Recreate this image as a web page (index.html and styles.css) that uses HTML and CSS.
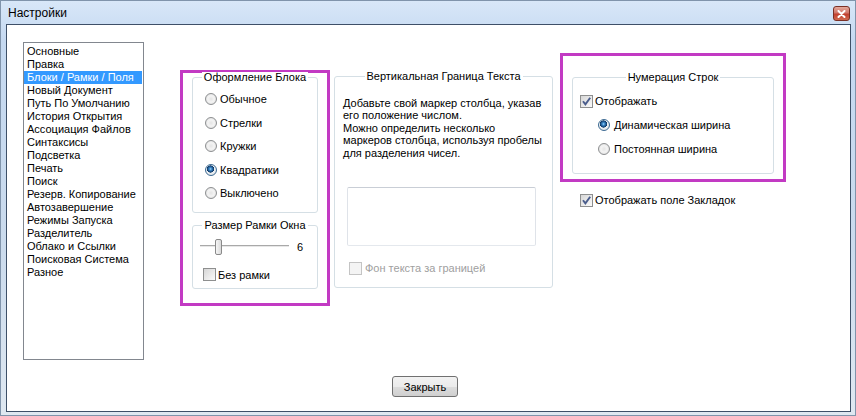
FILE: index.html
```html
<!DOCTYPE html>
<html lang="ru">
<head>
    <meta charset="UTF-8">
    <title>Настройки</title>
    <link rel="stylesheet" href="styles.css">
</head>
<body>
    <div class="window">
        <div class="titlebar">
            <span class="title">Настройки</span>
            <span class="close">
                <svg width="9" height="8" viewBox="0 0 9 8"><path d="M1.5 1 L7.5 7 M7.5 1 L1.5 7" stroke="#fff" stroke-width="2" stroke-linecap="round"/></svg>
            </span>
        </div>

        <div class="client">
            <div class="main">
                <ul class="listbox">
                    <li>Основные</li>
                    <li>Правка</li>
                    <li class="sel">Блоки / Рамки / Поля</li>
                    <li>Новый Документ</li>
                    <li>Путь По Умолчанию</li>
                    <li>История Открытия</li>
                    <li>Ассоциация Файлов</li>
                    <li>Синтаксисы</li>
                    <li>Подсветка</li>
                    <li>Печать</li>
                    <li>Поиск</li>
                    <li>Резерв. Копирование</li>
                    <li>Автозавершение</li>
                    <li>Режимы Запуска</li>
                    <li>Разделитель</li>
                    <li>Облако и Ссылки</li>
                    <li>Поисковая Система</li>
                    <li>Разное</li>
                </ul>

                <!-- блоки и рамка окна -->
                <div class="mark col-frame">
                    <div class="group group-style">
                        <div class="group-title">Оформление Блока</div>
                        <div class="opts">
                            <label class="opt"><span class="radio"></span>Обычное</label>
                            <label class="opt"><span class="radio"></span>Стрелки</label>
                            <label class="opt"><span class="radio"></span>Кружки</label>
                            <label class="opt"><span class="radio on"></span>Квадратики</label>
                            <label class="opt"><span class="radio"></span>Выключено</label>
                        </div>
                    </div>
                    <div class="group group-size">
                        <div class="group-title">Размер Рамки Окна</div>
                        <div class="slider-row">
                            <span class="slider"><span class="thumb"></span></span>
                            <span class="slider-val">6</span>
                        </div>
                        <label class="check-row no-frame"><span class="check"></span>Без рамки</label>
                    </div>
                </div>

                <!-- вертикальная граница -->
                <div class="group col-margin">
                    <div class="group-title">Вертикальная Граница Текста</div>
                    <p class="para">Добавьте свой маркер столбца, указав<br>его положение числом.<br>Можно определить несколько<br>маркеров столбца, используя пробелы<br>для разделения чисел.</p>
                    <div class="textbox"></div>
                    <label class="check-row disabled"><span class="check"></span>Фон текста за границей</label>
                </div>

                <!-- нумерация строк -->
                <div class="col-lines">
                    <div class="mark mark-lines">
                        <div class="group group-lines">
                            <div class="group-title">Нумерация Строк</div>
                            <label class="check-row show-num"><span class="check"><svg width="11" height="11" viewBox="0 0 11 11"><path d="M2 5.2 L4.4 8.4 L9.2 1.8" fill="none" stroke="#4a5d8c" stroke-width="1.9"/></svg></span>Отображать</label>
                            <label class="opt wide"><span class="radio on"></span>Динамическая ширина</label>
                            <label class="opt wide"><span class="radio"></span>Постоянная ширина</label>
                        </div>
                    </div>
                    <label class="check-row bookmarks"><span class="check"><svg width="11" height="11" viewBox="0 0 11 11"><path d="M2 5.2 L4.4 8.4 L9.2 1.8" fill="none" stroke="#4a5d8c" stroke-width="1.9"/></svg></span>Отображать поле Закладок</label>
                </div>
            </div>

            <div class="footer">
                <button class="btn">Закрыть</button>
            </div>
        </div>
    </div>
</body>
</html>
```

FILE: styles.css
```css
* {
    box-sizing: border-box;
}

body {
    margin: 0;
    font-family: "Liberation Sans", Arial, sans-serif;
    font-size: 11px;
    color: #000;
}

/* окно */
.window {
    width: 856px;
    height: 416px;
    border: 1px solid #8094ab;
    padding: 0 4px 3px 5px;
    display: flex;
    flex-direction: column;
    background: linear-gradient(#d8e7f8, #c5d9f1 40px, #cbdbed 60%, #dfe8f1);
}

.titlebar {
    height: 23px;
    display: flex;
    align-items: center;
    justify-content: space-between;
    padding-left: 2px;
}

.title {
    font-size: 12px;
}

.close {
    width: 17px;
    height: 15px;
    margin: 2px 1px 0 0;
    display: flex;
    align-items: center;
    justify-content: center;
    border: 1px solid #7a3026;
    border-radius: 3px;
    background: linear-gradient(#e4a99c, #d0766a 45%, #c2402f 55%, #d06a50);
}

.client {
    flex: 1;
    display: flex;
    flex-direction: column;
    background: #fff;
    border: 1px solid #3e5068;
}

.main {
    display: flex;
    align-items: flex-start;
    padding: 17px 0 0 16px;
}

/* список разделов */
.listbox {
    width: 121px;
    height: 318px;
    margin: 0;
    padding: 2px 0 0 0;
    list-style: none;
    border: 1px solid #82878f;
}

.listbox li {
    line-height: 13px;
    padding-left: 3px;
    white-space: nowrap;
}

.listbox li.sel {
    background: #3399ff;
    color: #fff;
    margin-right: 1px;
}

/* выделение на скриншоте */
.mark {
    border: 3px solid #c23ac3;
}

/* группы */
.group {
    border: 1px solid #d5dfe5;
    border-radius: 3px;
}

.group-title {
    display: table;
    margin: -6px auto 0;
    padding: 0 2px;
    line-height: 11px;
    background: #fff;
    white-space: nowrap;
}

.col-frame {
    width: 150px;
    margin: 28px 0 0 36px;
    padding: 4px 9px 14px 9px;
}

.opts {
    margin-top: 4.5px;
    padding-bottom: 7px;
}

.opt {
    display: flex;
    align-items: center;
    height: 23.5px;
    padding-left: 12px;
}

.radio {
    width: 12px;
    height: 12px;
    margin-right: 3px;
    border-radius: 50%;
    border: 1px solid #8d8f91;
    background: radial-gradient(circle at 50% 50%, #e4e4e4 0, #f4f4f4 45%, #d2d2d2 100%);
}

.radio.on {
    border-color: #3c6a92;
    background: radial-gradient(circle at 45% 40%, #a8dcff 0, #3f8ccc 1.2px, #1a4f84 2.8px, #0e3560 3.4px, #eef2f5 3.8px, #d4d8dc 100%);
}

.group-size {
    margin-top: 12px;
    padding-bottom: 7px;
}

.slider-row {
    display: flex;
    align-items: center;
    height: 17px;
    margin-top: 7px;
    padding-left: 7px;
}

.slider {
    width: 89px;
    height: 17px;
    display: flex;
    align-items: center;
    background: linear-gradient(transparent 7px, #a9a9a9 7px, #a9a9a9 8px, #e7e7e7 8px, #e7e7e7 9px, transparent 9px);
}

.thumb {
    width: 7px;
    height: 16px;
    margin-left: 15px;
    border: 1px solid #8a8a8a;
    border-radius: 2px;
    background: linear-gradient(to right, #f6f6f6, #dadada);
}

.slider-val {
    margin-left: 8px;
}

.check-row {
    display: flex;
    align-items: center;
    height: 13px;
}

.check {
    width: 13px;
    height: 13px;
    margin-right: 2px;
    display: flex;
    align-items: center;
    justify-content: center;
    border: 1px solid #8e8f8f;
    background: linear-gradient(135deg, #d6d6d6, #fbfbfb);
}

.no-frame {
    margin-top: 13px;
    padding-left: 10px;
}

.col-margin {
    width: 219px;
    height: 212px;
    margin: 34px 0 0 4px;
}

.para {
    margin: 14.75px 0 0 8px;
    line-height: 12.5px;
    white-space: nowrap;
}

.textbox {
    width: 189px;
    height: 59px;
    margin: 27.75px 0 0 12px;
    border: 1px solid;
    border-color: #c9ced6 #dfe3e9 #e4e8ed #dfe3e9;
    border-radius: 2px;
}

.disabled {
    margin-top: 15.5px;
    padding-left: 14px;
    color: #a0a0a0;
}

.disabled .check {
    margin-right: 3px;
    border-color: #c4c4c4;
    background: #f4f4f4;
}

.col-lines {
    margin: 11px 0 0 7px;
}

.mark-lines {
    width: 226px;
    padding: 21px 9px 5px 9px;
}

.group-lines {
    padding-bottom: 12px;
}

.show-num {
    height: 24px;
    margin-top: 6px;
    padding-left: 7px;
}

.opt.wide {
    height: 24px;
    padding-left: 25px;
}

.opt.wide:first-of-type {
    margin-top: 2px;
}

.opt.wide .radio {
    margin-right: 4px;
}

.bookmarks {
    margin-top: 11.5px;
    padding-left: 20px;
}

/* кнопка */
.footer {
    margin-top: auto;
    display: flex;
    justify-content: center;
    padding: 0 7px 14px 0;
}

.btn {
    width: 66px;
    height: 21px;
    padding: 0;
    font-family: inherit;
    font-size: 11px;
    color: #000;
    border: 1px solid #707070;
    border-radius: 3px;
    background: linear-gradient(#f2f2f2, #ebebeb 50%, #dddddd 50%, #cfcfcf);
}
```
